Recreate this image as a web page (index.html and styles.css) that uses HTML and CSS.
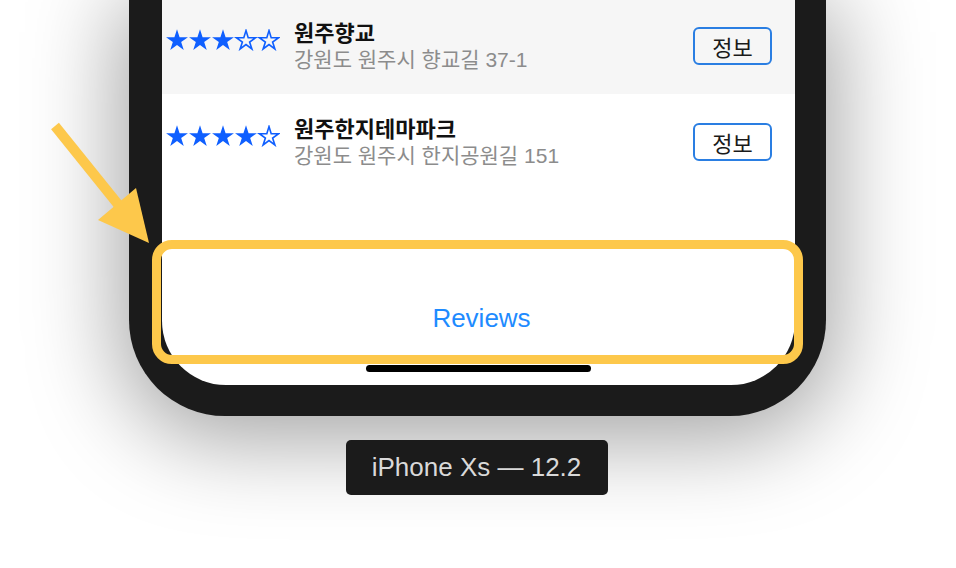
FILE: index.html
```html
<!DOCTYPE html>
<html lang="ko">
<head>
	<meta charset="UTF-8">
	<title>Reviews</title>
	<link rel="stylesheet" href="styles.css">
</head>
<body>
	<svg width="0" height="0" class="defs">
		<defs>
			<polygon id="star" points="11,0.2 13.58,8.15 21.94,8.15 15.17,13.06 17.76,21 11,16.09 4.24,21 6.83,13.06 0.06,8.15 8.42,8.15"/>
			<polygon id="star-o" points="11,1.6 13.2,8.7 20.6,8.7 14.6,13.0 16.9,20.0 11,15.6 5.1,20.0 7.4,13.0 1.4,8.7 8.8,8.7"/>
		</defs>
	</svg>
	<div class="stage">
		<div class="phone">
			<div class="screen">
				<div class="row gray">
					<svg class="stars" width="114" height="22" viewBox="0 0 114 22">
						<use href="#star" x="0" class="on"/>
						<use href="#star" x="23" class="on"/>
						<use href="#star" x="46" class="on"/>
						<use href="#star-o" x="69" class="off"/>
						<use href="#star-o" x="92" class="off"/>
					</svg>
					<div class="info">
						<div class="name">원주향교</div>
						<div class="addr">강원도 원주시 향교길 37-1</div>
					</div>
					<div class="btn">정보</div>
				</div>
				<div class="row">
					<svg class="stars" width="114" height="22" viewBox="0 0 114 22">
						<use href="#star" x="0" class="on"/>
						<use href="#star" x="23" class="on"/>
						<use href="#star" x="46" class="on"/>
						<use href="#star" x="69" class="on"/>
						<use href="#star-o" x="92" class="off"/>
					</svg>
					<div class="info">
						<div class="name">원주한지테마파크</div>
						<div class="addr">강원도 원주시 한지공원길 151</div>
					</div>
					<div class="btn">정보</div>
				</div>
				<div class="tabbar"><span>Reviews</span></div>
				<div class="home"></div>
			</div>
		</div>
		<div class="label">iPhone Xs — 12.2</div>

		<div class="highlight"></div>
		<svg class="arrow" width="160" height="250" viewBox="0 0 160 250">
			<line x1="55" y1="126" x2="121" y2="208"/>
			<polygon points="98,220 136,188 149,243"/>
		</svg>
	</div>
</body>
</html>
```

FILE: styles.css
```css
*{
	margin: 0;
	padding: 0;
	box-sizing: border-box;
}
html,body{
	width: 956px;
	height: 568px;
	overflow: hidden;
	background: #fff;
}
body{
	font-family: "Liberation Sans", "Noto Sans CJK KR", sans-serif;
}
.defs{
	position: absolute;
}
.stage{
	position: relative;
	height: 568px;
	display: flex;
	flex-direction: column;
	align-items: flex-start;
}
.phone{
	margin: -2px 0 0 129px;
	width: 697px;
	padding: 0 31px 31px 33px;
	background: #1b1b1b;
	border-radius: 0 0 96px 96px;
	box-shadow: 0 14px 90px 10px rgba(0,0,0,0.36);
}
.screen{
	height: 387px;
	background: #fff;
	border-radius: 0 0 64px 64px;
	overflow: hidden;
	display: flex;
	flex-direction: column;
}
.row{
	height: 96px;
	flex: none;
	display: flex;
	align-items: center;
	padding: 0 23px 0 4px;
	background: #fff;
}
.row.gray{
	background: #f6f6f6;
}
.stars{
	flex: none;
	margin-bottom: 12px;
}
.stars .on{
	fill: #0f5fff;
}
.stars .off{
	fill: none;
	stroke: #0f5fff;
	stroke-width: 1.6px;
}
.info{
	flex: 1;
	margin-left: 14px;
	font-family: "Noto Sans CJK KR", sans-serif;
}
.name{
	font-size: 22px;
	line-height: 28px;
	font-weight: bold;
	color: #111;
}
.addr{
	font-size: 21px;
	line-height: 30px;
	color: #8c8c8c;
	font-family: "Liberation Sans", "Noto Sans CJK KR", sans-serif;
}
.btn{
	width: 79px;
	height: 38px;
	border: 2px solid #2a7ee2;
	border-radius: 6px;
	display: flex;
	align-items: center;
	justify-content: center;
	font-family: "Noto Sans CJK KR", sans-serif;
	font-size: 22px;
	color: #1a1a1a;
}
.tabbar{
	flex: 1;
	display: flex;
	align-items: flex-end;
	justify-content: center;
	padding: 0 0 32px 6px;
}
.tabbar span{
	font-size: 26px;
	line-height: 30px;
	color: #1e8bff;
}
.home{
	flex: none;
	width: 225px;
	height: 7px;
	margin: 0 auto 13px;
	background: #000;
	border-radius: 4px;
}
.label{
	align-self: center;
	margin: 24px 0 0 -2px;
	height: 55px;
	padding: 0 27px 0 26px;
	background: #1b1b1b;
	border-radius: 5px;
	color: #d9d9d9;
	font-size: 26px;
	line-height: 55px;
}
.highlight{
	position: absolute;
	left: 152px;
	top: 240px;
	width: 651px;
	height: 124px;
	border: 9px solid #fdc84b;
	border-radius: 20px;
}
.arrow{
	position: absolute;
	left: 0;
	top: 0;
}
.arrow line{
	stroke: #fdc84b;
	stroke-width: 10;
}
.arrow polygon{
	fill: #fdc84b;
}
```
